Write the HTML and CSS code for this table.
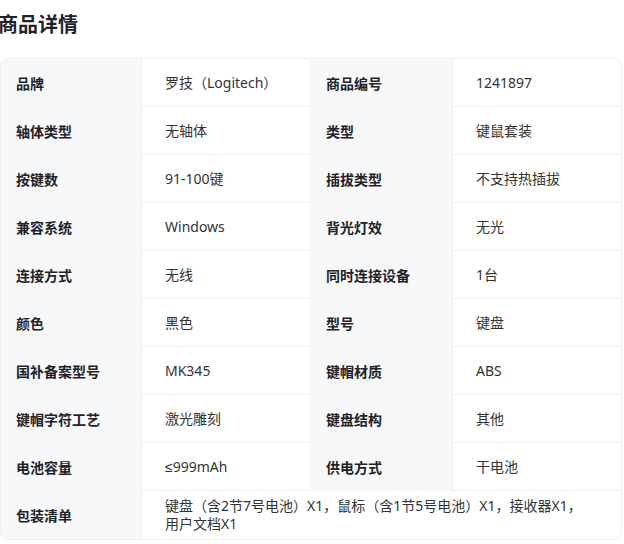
FILE: index.html
```html
<!DOCTYPE html>
<html lang="zh-CN">
<head>
<meta charset="utf-8">
<title>商品详情</title>
<link rel="stylesheet" href="styles.css">
</head>
<body>
<h2 class="title">商品详情</h2>
<div class="specs">
  <div class="label">品牌</div><div class="value">罗技（Logitech）</div>
  <div class="label label-r">商品编号</div><div class="value">1241897</div>

  <div class="label">轴体类型</div><div class="value">无轴体</div>
  <div class="label label-r">类型</div><div class="value">键鼠套装</div>

  <div class="label">按键数</div><div class="value">91-100键</div>
  <div class="label label-r">插拔类型</div><div class="value">不支持热插拔</div>

  <div class="label">兼容系统</div><div class="value">Windows</div>
  <div class="label label-r">背光灯效</div><div class="value">无光</div>

  <div class="label">连接方式</div><div class="value">无线</div>
  <div class="label label-r">同时连接设备</div><div class="value">1台</div>

  <div class="label">颜色</div><div class="value">黑色</div>
  <div class="label label-r">型号</div><div class="value">键盘</div>

  <div class="label">国补备案型号</div><div class="value">MK345</div>
  <div class="label label-r">键帽材质</div><div class="value">ABS</div>

  <div class="label">键帽字符工艺</div><div class="value">激光雕刻</div>
  <div class="label label-r">键盘结构</div><div class="value">其他</div>

  <div class="label">电池容量</div><div class="value">≤999mAh</div>
  <div class="label label-r">供电方式</div><div class="value">干电池</div>

  <div class="label">包装清单</div><div class="value value-wide last">键盘（含2节7号电池）X1，鼠标（含1节5号电池）X1，接收器X1，<br>用户文档X1</div>
</div>
</body>
</html>
```

FILE: styles.css
```css
html, body {
  margin: 0;
  padding: 0;
  background: #ffffff;
}

body {
  font-family: "Noto Sans", "Liberation Sans", "Noto Sans CJK TC", sans-serif;
  color: #333333;
}

.title {
  margin: 11px 0 19px -2px;
  font-size: 20px;
  line-height: 28px;
  font-weight: 700;
  color: #1f2329;
}

.specs {
  width: 620px;
  display: grid;
  grid-template-columns: 140px 169px 142px 169px;
  border: 1px solid #eceef1;
  border-radius: 8px;
  overflow: hidden;
}

.label,
.value {
  display: flex;
  align-items: center;
  min-height: 47px;
  font-size: 14px;
  line-height: 17px;
}

.label {
  background: #f7f8fa;
  font-weight: 700;
  color: #1f2329;
  padding: 0 8px 0 15px;
}

.label-r {
  padding-left: 16px;
}

.value {
  border-left: 1px solid #eceef1;
  border-bottom: 1px solid #eceef1;
  padding: 0 16px 0 23px;
  color: #333333;
}

.value-wide {
  grid-column: span 3;
  display: block;
  padding-top: 6px;
  padding-bottom: 6px;
  line-height: 18px;
  min-height: 0;
}

.last {
  border-bottom: none;
}
```
